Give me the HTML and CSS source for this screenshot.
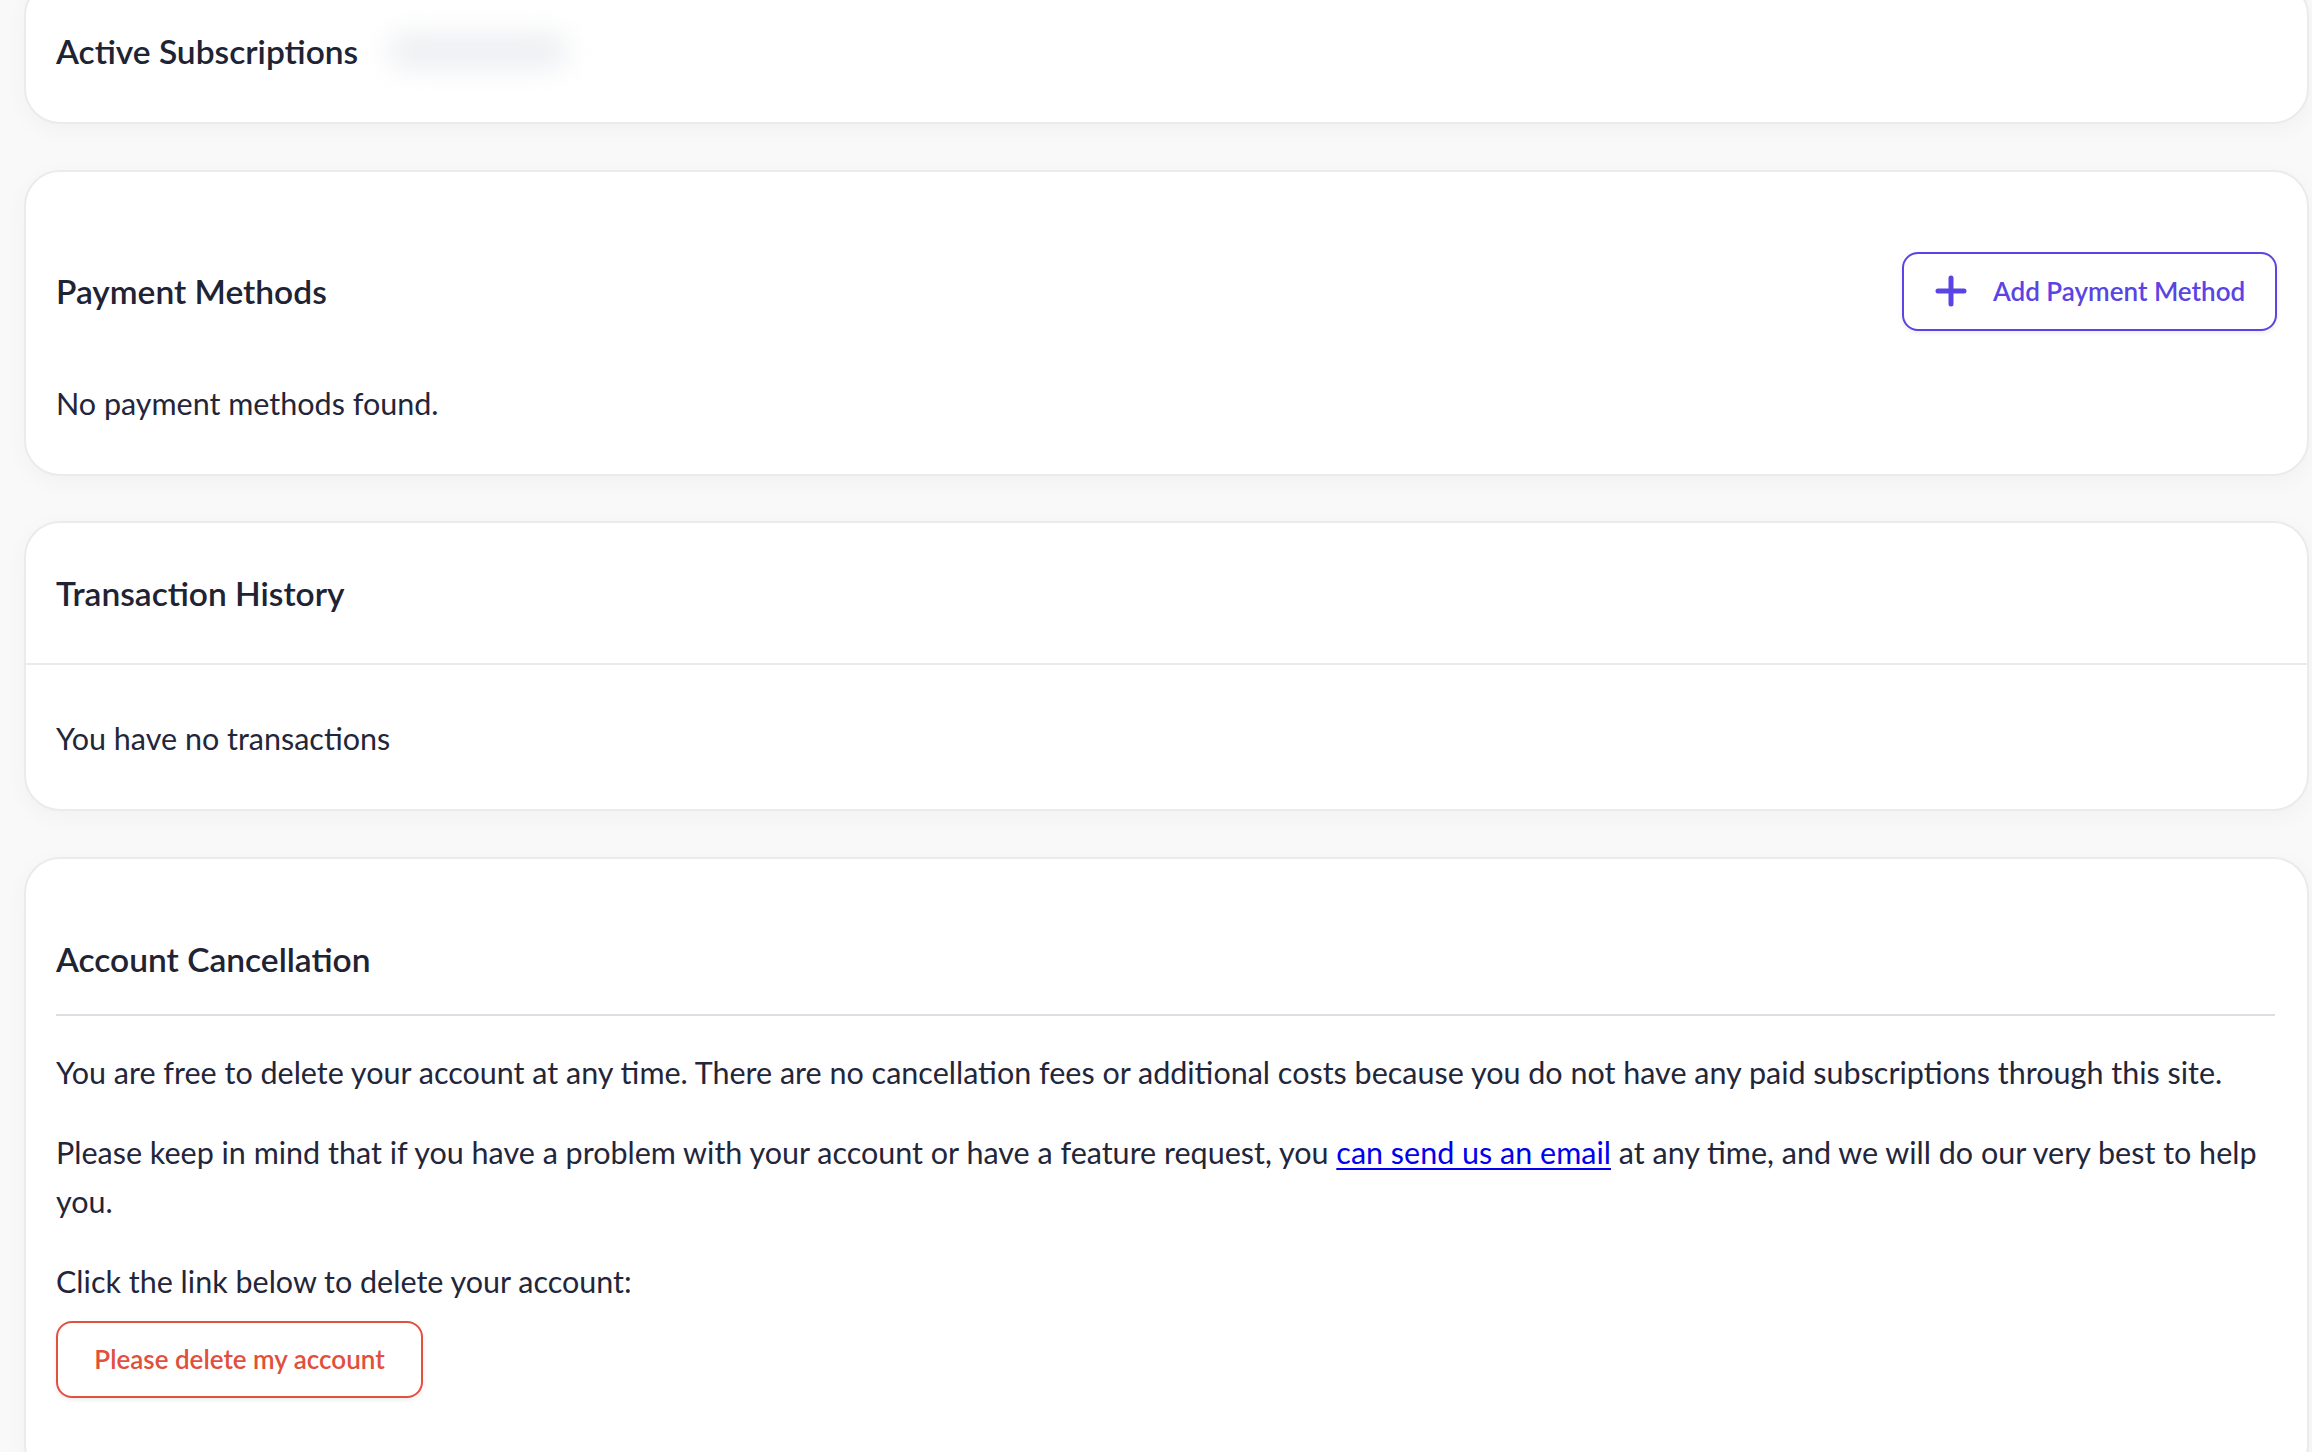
FILE: index.html
```html
<!DOCTYPE html>
<html lang="en">
<head>
<meta charset="utf-8">
<title>Billing</title>
<link rel="stylesheet" href="styles.css">
</head>
<body>
<main class="page">
  <section class="card card-subs">
    <div class="subs-head">
      <h2 class="card-title">Active Subscriptions</h2>
      <span class="blur-pill"></span>
    </div>
  </section>

  <section class="card card-payment">
    <div class="payment-head">
      <h2 class="card-title">Payment Methods</h2>
      <button class="btn btn-primary-outline" type="button">
        <svg class="plus" viewBox="0 0 32 32" width="32" height="32" aria-hidden="true">
          <path d="M16 3v26M3 16h26" fill="none" stroke="currentColor" stroke-width="5" stroke-linecap="round"/>
        </svg>
        <span>Add Payment Method</span>
      </button>
    </div>
    <p class="text payment-empty">No payment methods found.</p>
  </section>

  <section class="card card-tx">
    <div class="tx-head">
      <h2 class="card-title">Transaction History</h2>
    </div>
    <div class="tx-body">
      <p class="text">You have no transactions</p>
    </div>
  </section>

  <section class="card card-cancel">
    <h2 class="card-title cancel-title">Account Cancellation</h2>
    <div class="cancel-body">
      <p class="text">You are free to delete your account at any time. There are no cancellation fees or additional costs because you do not have any paid subscriptions through this site.</p>
      <p class="text"><span>Please keep in mind that if you have a problem with your account or have a feature request, you</span> <a href="#" class="mail-link">can send us an email</a> <span>at any time, and we will do our very best to help</span> <span>you.</span></p>
      <p class="text">Click the link below to delete your account:</p>
      <div class="danger-row"><button class="btn btn-danger-outline" type="button">Please delete my account</button></div>
    </div>
  </section>
</main>
</body>
</html>
```
FILE: styles.css
```css
html, body {
  margin: 0;
  padding: 0;
}
body {
  background: #f9f9fa;
  font-family: "Lato", "Liberation Sans", sans-serif;
  color: #23263a;
  overflow: hidden;
  height: 1452px;
}
.page {
  display: flex;
  flex-direction: column;
  gap: 45.5px;
  padding: 0 3px 0 24px;
  margin-top: -20px;
}
.card {
  background: #fff;
  border: 2px solid #ebebee;
  border-radius: 36px;
  box-shadow: 0 6px 24px rgba(20, 20, 40, 0.035);
  padding: 0 30px;
}
.card-title {
  margin: 0;
  font-size: 33.5px;
  font-weight: 600;
  line-height: 54px;
  color: #202334;
}
.text {
  margin: 0;
  font-size: 30.5px;
  line-height: 49px;
  color: #23263a;
}

/* Active subscriptions */
.subs-head {
  display: flex;
  align-items: center;
  padding: 42px 0 44px;
}
.blur-pill {
  display: inline-block;
  width: 180px;
  height: 34px;
  margin-left: 30px;
  border-radius: 17px;
  background: #eceef1;
  filter: blur(14px);
}

/* Payment methods */
.card-payment {
  padding-top: 80px;
  padding-bottom: 46px;
}
.payment-head {
  display: flex;
  align-items: center;
  justify-content: space-between;
  height: 79px;
}
.payment-empty {
  margin-top: 48px;
}
.btn {
  font-family: "Lato", "Liberation Sans", sans-serif;
  font-weight: 600;
  font-size: 26px;
  background: #fff;
  border-radius: 16px;
  cursor: pointer;
  box-shadow: 0 2px 5px rgba(0, 0, 0, 0.08);
}
.btn-primary-outline {
  display: flex;
  align-items: center;
  gap: 26px;
  height: 79px;
  width: 375px;
  padding: 0 0 0 31px;
  border: 2px solid #5a44e4;
  color: #5a44e4;
}
.plus {
  width: 32px;
  height: 32px;
  flex: none;
}

/* Transactions */
.card-tx {
  padding: 0;
}
.tx-head {
  padding: 43px 30px 43px;
  border-bottom: 2px solid #e9e9ee;
}
.tx-body {
  padding: 49px 30px 46px;
}

/* Cancellation */
.card-cancel {
  padding-top: 73px;
  padding-bottom: 80px;
}
.cancel-title {
  padding-bottom: 28px;
  border-bottom: 2px solid #dedee4;
  margin-right: 2px;
}
.cancel-body {
  display: flex;
  flex-direction: column;
  gap: 31px;
  padding-top: 32px;
}
.mail-link {
  color: #0000ee;
  text-decoration: underline;
  text-decoration-thickness: 2px;
  text-underline-offset: 4px;
}
.danger-row {
  margin-top: -16px;
}
.btn-danger-outline {
  height: 77px;
  width: 367px;
  border: 2px solid #e0513f;
  color: #e0503d;
  padding: 0;
}
```
